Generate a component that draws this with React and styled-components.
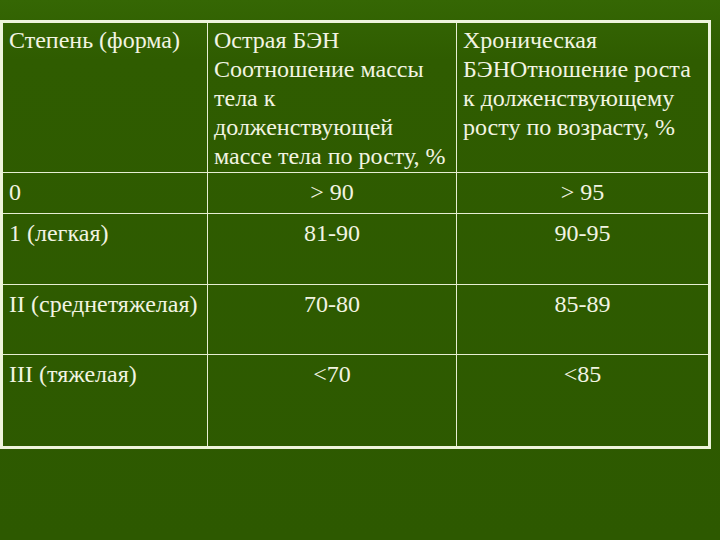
import React from 'react';
import styled, { createGlobalStyle } from 'styled-components';

const GlobalStyle = createGlobalStyle`
  html, body {
    margin: 0;
    padding: 0;
    background: #2f5c00;
  }
  body {
    width: 720px;
    height: 540px;
    overflow: hidden;
    font-family: "Liberation Serif", "Times New Roman", serif;
  }
`;

const Slide = styled.div`
  width: 720px;
  height: 540px;
  padding-top: 20px;
  box-sizing: border-box;
  background: linear-gradient(180deg, #356704 0px, #2f5c00 60px, #2d5900 100%);
`;

const Table = styled.table`
  width: 711px;
  border-collapse: collapse;
  table-layout: fixed;
  border: 3px solid #eef4dc;
  color: #f2f4e2;
  font-family: "Liberation Serif", "Times New Roman", serif;
  font-size: 24px;
  line-height: 29px;
`;

const Row = styled.tr`
  height: ${p => p.$h}px;
`;

const Cell = styled.td`
  border: 1px solid #e6eed2;
  vertical-align: top;
  padding: ${p => (p.$head ? 3 : 5)}px ${p => (p.$center ? 0 : 2)}px 0
    ${p => (p.$center ? 0 : 6)}px;
  text-align: ${p => (p.$center ? 'center' : 'left')};
  white-space: nowrap;
`;

const rows = [
  { grade: '0', acute: '> 90', chronic: '> 95', h: 41 },
  { grade: '1 (легкая)', acute: '81-90', chronic: '90-95', h: 71 },
  { grade: 'II (среднетяжелая)', acute: '70-80', chronic: '85-89', h: 70 },
  { grade: 'III (тяжелая)', acute: '<70', chronic: '<85', h: 93 }
];

export default function App() {
  return (
    <>
      <GlobalStyle />
      <Slide>
        <Table>
          <colgroup>
            <col style={{ width: 206 }} />
            <col style={{ width: 249 }} />
            <col />
          </colgroup>
          <tbody>
            <Row $h={151}>
              <Cell $head>Степень (форма)</Cell>
              <Cell $head>
                Острая БЭН
                <br />
                Соотношение массы
                <br />
                тела к
                <br />
                долженствующей
                <br />
                массе тела по росту, %
              </Cell>
              <Cell $head>
                Хроническая
                <br />
                БЭНОтношение роста
                <br />
                к долженствующему
                <br />
                росту по возрасту, %
              </Cell>
            </Row>
            {rows.map(r => (
              <Row key={r.grade} $h={r.h}>
                <Cell>{r.grade}</Cell>
                <Cell $center>{r.acute}</Cell>
                <Cell $center>{r.chronic}</Cell>
              </Row>
            ))}
          </tbody>
        </Table>
      </Slide>
    </>
  );
}
